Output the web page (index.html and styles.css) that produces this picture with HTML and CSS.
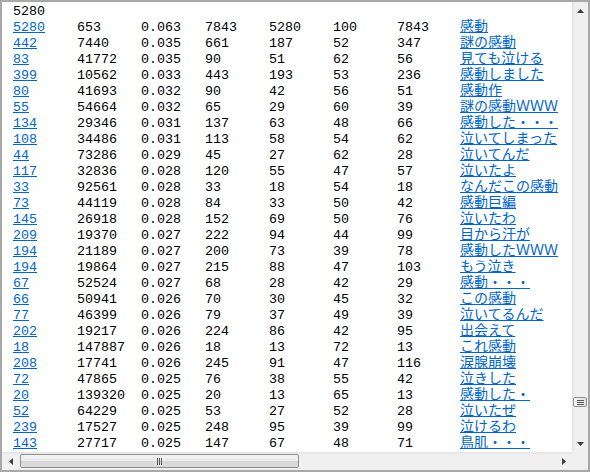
FILE: index.html
```html
<!DOCTYPE html>
<html>
<head>
<meta charset="utf-8">
<link rel="stylesheet" href="styles.css">
</head>
<body>
<div class="window">
  <div class="view">
    <div class="head">5280</div>
    <div class="rows">
      <a href="#">5280</a><span>653</span><span>0.063</span><span>7843</span><span>5280</span><span>100</span><span>7843</span><a class="jp" href="#"><span>感動</span></a>
      <a href="#">442</a><span>7440</span><span>0.035</span><span>661</span><span>187</span><span>52</span><span>347</span><a class="jp" href="#"><span>謎の感動</span></a>
      <a href="#">83</a><span>41772</span><span>0.035</span><span>90</span><span>51</span><span>62</span><span>56</span><a class="jp" href="#"><span>見ても泣ける</span></a>
      <a href="#">399</a><span>10562</span><span>0.033</span><span>443</span><span>193</span><span>53</span><span>236</span><a class="jp" href="#"><span>感動しました</span></a>
      <a href="#">80</a><span>41693</span><span>0.032</span><span>90</span><span>42</span><span>56</span><span>51</span><a class="jp" href="#"><span>感動作</span></a>
      <a href="#">55</a><span>54664</span><span>0.032</span><span>65</span><span>29</span><span>60</span><span>39</span><a class="jp" href="#"><span>謎の感動ＷＷＷ</span></a>
      <a href="#">134</a><span>29346</span><span>0.031</span><span>137</span><span>63</span><span>48</span><span>66</span><a class="jp" href="#"><span>感動した・・・</span></a>
      <a href="#">108</a><span>34486</span><span>0.031</span><span>113</span><span>58</span><span>54</span><span>62</span><a class="jp" href="#"><span>泣いてしまった</span></a>
      <a href="#">44</a><span>73286</span><span>0.029</span><span>45</span><span>27</span><span>62</span><span>28</span><a class="jp" href="#"><span>泣いてんだ</span></a>
      <a href="#">117</a><span>32836</span><span>0.028</span><span>120</span><span>55</span><span>47</span><span>57</span><a class="jp" href="#"><span>泣いたよ</span></a>
      <a href="#">33</a><span>92561</span><span>0.028</span><span>33</span><span>18</span><span>54</span><span>18</span><a class="jp" href="#"><span>なんだこの感動</span></a>
      <a href="#">73</a><span>44119</span><span>0.028</span><span>84</span><span>33</span><span>50</span><span>42</span><a class="jp" href="#"><span>感動巨編</span></a>
      <a href="#">145</a><span>26918</span><span>0.028</span><span>152</span><span>69</span><span>50</span><span>76</span><a class="jp" href="#"><span>泣いたわ</span></a>
      <a href="#">209</a><span>19370</span><span>0.027</span><span>222</span><span>94</span><span>44</span><span>99</span><a class="jp" href="#"><span>目から汗が</span></a>
      <a href="#">194</a><span>21189</span><span>0.027</span><span>200</span><span>73</span><span>39</span><span>78</span><a class="jp" href="#"><span>感動したＷＷＷ</span></a>
      <a href="#">194</a><span>19864</span><span>0.027</span><span>215</span><span>88</span><span>47</span><span>103</span><a class="jp" href="#"><span>もう泣き</span></a>
      <a href="#">67</a><span>52524</span><span>0.027</span><span>68</span><span>28</span><span>42</span><span>29</span><a class="jp" href="#"><span>感動・・・</span></a>
      <a href="#">66</a><span>50941</span><span>0.026</span><span>70</span><span>30</span><span>45</span><span>32</span><a class="jp" href="#"><span>この感動</span></a>
      <a href="#">77</a><span>46399</span><span>0.026</span><span>79</span><span>37</span><span>49</span><span>39</span><a class="jp" href="#"><span>泣いてるんだ</span></a>
      <a href="#">202</a><span>19217</span><span>0.026</span><span>224</span><span>86</span><span>42</span><span>95</span><a class="jp" href="#"><span>出会えて</span></a>
      <a href="#">18</a><span>147887</span><span>0.026</span><span>18</span><span>13</span><span>72</span><span>13</span><a class="jp" href="#"><span>これ感動</span></a>
      <a href="#">208</a><span>17741</span><span>0.026</span><span>245</span><span>91</span><span>47</span><span>116</span><a class="jp" href="#"><span>涙腺崩壊</span></a>
      <a href="#">72</a><span>47865</span><span>0.025</span><span>76</span><span>38</span><span>55</span><span>42</span><a class="jp" href="#"><span>泣きした</span></a>
      <a href="#">20</a><span>139320</span><span>0.025</span><span>20</span><span>13</span><span>65</span><span>13</span><a class="jp" href="#"><span>感動した・</span></a>
      <a href="#">52</a><span>64229</span><span>0.025</span><span>53</span><span>27</span><span>52</span><span>28</span><a class="jp" href="#"><span>泣いたぜ</span></a>
      <a href="#">239</a><span>17527</span><span>0.025</span><span>248</span><span>95</span><span>39</span><span>99</span><a class="jp" href="#"><span>泣けるわ</span></a>
      <a href="#">143</a><span>27717</span><span>0.025</span><span>147</span><span>67</span><span>48</span><span>71</span><a class="jp" href="#"><span>鳥肌・・・</span></a>
    </div>
  </div>
  <div class="vbar">
    <div class="btn"><svg width="7" height="4" viewBox="0 0 7 4"><polygon points="3.5,0 7,4 0,4" fill="#3c3c3c"/></svg></div>
    <div class="vtrack"><div class="vthumb"><svg width="7" height="5" viewBox="0 0 7 5"><path d="M0 .5H7M0 2.5H7M0 4.5H7" stroke="#5a5a5a" stroke-width="1"/></svg></div></div>
    <div class="btn"><svg width="7" height="4" viewBox="0 0 7 4"><polygon points="0,0 7,0 3.5,4" fill="#3c3c3c"/></svg></div>
  </div>
  <div class="hbar">
    <div class="hbtn"><svg width="4" height="7" viewBox="0 0 4 7"><polygon points="4,0 4,7 0,3.5" fill="#3c3c3c"/></svg></div>
    <div class="htrack"><div class="hthumb"><svg width="5" height="7" viewBox="0 0 5 7"><path d="M.5 0V7M2.5 0V7M4.5 0V7" stroke="#5a5a5a" stroke-width="1"/></svg></div></div>
    <div class="hbtn"><svg width="4" height="7" viewBox="0 0 4 7"><polygon points="0,0 4,3.5 0,7" fill="#3c3c3c"/></svg></div>
  </div>
  <div class="corner"></div>
</div>
</body>
</html>
```

FILE: styles.css
```css
html, body {
  margin: 0;
  padding: 0;
  background: #fff;
}

.window {
  width: 590px;
  height: 472px;
  box-sizing: border-box;
  border: 2px solid #a8a8a8;
  display: grid;
  grid-template-columns: 570px 16px;
  grid-template-rows: 450px 18px;
  background: #fff;
}

.view {
  overflow: hidden;
  padding: 0 0 0 11px;
  font-family: "Liberation Mono", "Noto Sans CJK JP", monospace;
  font-size: 13.333px;
  line-height: 16px;
  color: #000;
}

.head {
  height: 16px;
  margin-top: 2px;
  white-space: nowrap;
}

.rows {
  display: grid;
  grid-template-columns: repeat(7, 64px) max-content;
  grid-auto-rows: 16px;
  white-space: nowrap;
}

.rows a {
  color: #0066cc;
  text-decoration: underline;
}

.rows .jp {
  margin-left: -1px;
}

.rows .jp span {
  font-family: "Noto Sans CJK JP", sans-serif;
  font-size: 14px;
  line-height: 10px;
}

.vbar {
  display: flex;
  flex-direction: column;
  background: linear-gradient(to right, #e3e3e3, #f0f0f0 3px, #f0f0f0);
}

.btn {
  height: 17px;
  display: flex;
  align-items: center;
  justify-content: center;
  flex: none;
}

.vtrack {
  flex: 1;
  display: flex;
  flex-direction: column;
}

.vthumb {
  margin: 378px 1px 0 1px;
  height: 10px;
  box-sizing: border-box;
  border: 1px solid #8e8f8f;
  border-radius: 2px;
  background: linear-gradient(to right, #f4f4f4, #e2e2e2);
  display: flex;
  align-items: center;
  justify-content: center;
}

.hbar {
  display: flex;
  background: linear-gradient(to bottom, #e3e3e3, #f0f0f0 3px, #f0f0f0);
}

.hbtn {
  width: 17px;
  display: flex;
  align-items: center;
  justify-content: center;
  flex: none;
}

.htrack {
  flex: 1;
  display: flex;
  align-items: center;
}

.hthumb {
  margin-left: 1px;
  width: 279px;
  height: 14px;
  box-sizing: border-box;
  border: 1px solid #8e8f8f;
  border-radius: 2px;
  background: linear-gradient(to bottom, #f6f6f6, #e9e9e9 50%, #d8d8d8 51%, #dcdcdc);
  display: flex;
  align-items: center;
  justify-content: center;
}

.corner {
  background: #f0f0f0;
}
```
